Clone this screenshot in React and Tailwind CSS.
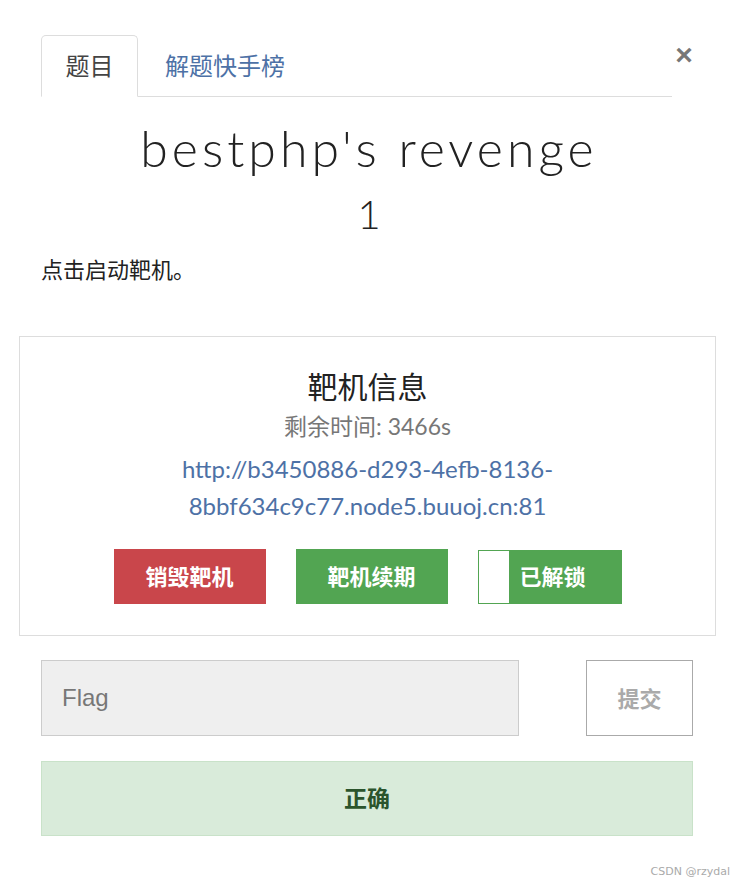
import React, { useState } from 'react';

const cjk = "font-['Lato','Noto_Sans_CJK_SC',sans-serif]";

const App = () => {
    const [tab, setTab] = useState('problem');
    const [flag, setFlag] = useState('');

    return (
        <div className={`w-[738px] h-[888px] bg-white relative text-[#222] ${cjk}`}>
            {/* header tabs */}
            <div className="flex items-start pt-[35px] pl-[41px] pr-[44px]">
                <ul className="flex flex-1 border-b border-[#ddd] h-[62px]">
                    <li
                        onClick={() => setTab('problem')}
                        className={`w-[97px] h-[62px] flex items-center justify-center text-[24px] cursor-pointer rounded-t-[5px] ${tab === 'problem' ? 'border border-[#ddd] border-b-white bg-white text-[#444]' : 'text-[#4d71a6]'}`}
                    >
                        题目
                    </li>
                    <li
                        onClick={() => setTab('rank')}
                        className={`h-[62px] px-[27px] flex items-center text-[24px] cursor-pointer ${tab === 'rank' ? 'text-[#444]' : 'text-[#4d71a6]'}`}
                    >
                        解题快手榜
                    </li>
                </ul>
                <button className="ml-[2px] w-[20px] mt-[6px] text-[30px] leading-[28px] font-bold text-[#777] font-['Liberation_Sans',sans-serif]">
                    ×
                </button>
            </div>

            {/* title */}
            <div className="text-center mt-[23px]">
                <h1 className="text-[50px] leading-[56px] font-light tracking-[4px] text-[#222] font-['Lato',sans-serif]">
                    bestphp's revenge
                </h1>
                <div className="mt-[14px] text-[40px] leading-[48px] font-light font-['Lato',sans-serif]">1</div>
            </div>

            <p className="mt-[17px] pl-[41px] text-[22px] leading-[30px] text-[#222]">点击启动靶机。</p>

            {/* instance box */}
            <div className="mt-[51px] mx-[19px] w-[697px] border border-[#ddd] pt-[29px] pb-[31px] flex flex-col items-center">
                <h3 className="text-[30px] leading-[40px] text-[#222]">靶机信息</h3>
                <div className="mt-[4px] text-[23px] leading-[32px] text-[#777]">剩余时间: 3466s</div>
                <a className="mt-[8px] text-[24px] leading-[37px] text-[#4d71a6] text-center font-['Lato',sans-serif]">
                    <span className="block">http://b3450886-d293-4efb-8136-</span>
                    <span className="block">8bbf634c9c77.node5.buuoj.cn:81</span>
                </a>
                <div className="mt-[25px] flex items-center gap-[30px]">
                    <button className="w-[152px] h-[55px] bg-[#c9464b] text-white text-[22px] font-bold">销毁靶机</button>
                    <button className="w-[152px] h-[55px] bg-[#52a552] text-white text-[22px] font-bold">靶机续期</button>
                    <button className="w-[144px] h-[54px] bg-[#52a552] text-white text-[22px] font-bold flex items-stretch">
                        <span className="w-[32px] bg-white border border-[#52a552]" />
                        <span className="pl-[10px] flex items-center">已解锁</span>
                    </button>
                </div>
            </div>

            {/* flag form */}
            <div className="mt-[24px] px-[41px] flex items-center justify-between w-[734px]">
                <input
                    value={flag}
                    onChange={(e) => setFlag(e.target.value)}
                    placeholder="Flag"
                    className="w-[478px] h-[76px] bg-[#efefef] border border-[#ccc] px-[20px] text-[24px] text-[#555] placeholder-[#777] outline-none font-['Liberation_Sans',sans-serif]"
                />
                <button className="w-[107px] h-[76px] border border-[#aaa] bg-white text-[#aaa] text-[22px] font-bold">提交</button>
            </div>

            <div className="mt-[25px] mx-[41px] w-[652px] h-[75px] bg-[#d9ebda] border border-[#c9e2c9] flex items-center justify-center text-[23px] font-bold text-[#2b542c]">
                正确
            </div>

            <div className="absolute right-[8px] bottom-[8px] text-[11px] text-[#aaa] font-['DejaVu_Sans',sans-serif]">CSDN @rzydal</div>
        </div>
    );
};

export default App;
